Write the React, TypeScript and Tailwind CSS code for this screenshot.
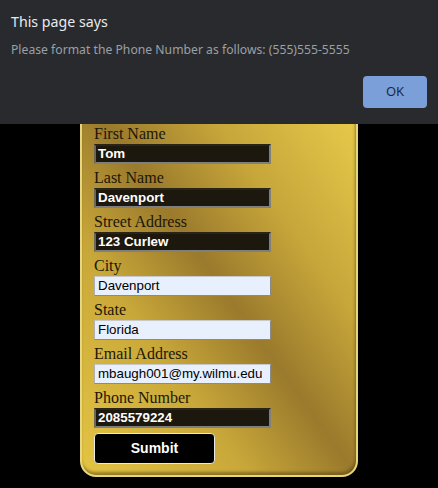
export default function App() {
  const fields = [
    { label: 'First Name', value: 'Tom', dark: true },
    { label: 'Last Name', value: 'Davenport', dark: true },
    { label: 'Street Address', value: '123 Curlew', dark: true },
    { label: 'City', value: 'Davenport', dark: false },
    { label: 'State', value: 'Florida', dark: false },
    { label: 'Email Address', value: 'mbaugh001@my.wilmu.edu', dark: false },
    { label: 'Phone Number', value: '2085579224', dark: true },
  ];

  return (
    <div className="relative min-h-[488px] w-full overflow-hidden bg-black">
      {/* Form card, top part sits under the alert */}
      <div className="pl-[80px] pt-[90px]">
        <div className="w-[278px] rounded-b-[16px] rounded-t-[8px] border-2 border-[#e6d77c] bg-[linear-gradient(to_top_right,#e4c443_0%,#c9a83a_30%,#9a7a2c_50%,#c6a53a_70%,#ebcf4c_100%)] px-[12px] pb-[11px] pt-[33px] shadow-[inset_-1px_-3px_3px_rgba(90,65,15,0.55)]">
          {fields.map((f) => (
            <div key={f.label} className="mb-[5px] flex flex-col">
              <label className="font-['Liberation_Serif',serif] text-[16px] leading-[18px] text-[#1c1608]">
                {f.label}
              </label>
              {f.dark ? (
                <div className="mt-px flex h-[20px] w-[177px] items-center border-2 border-t-[#2a2416] border-l-[#6d675a] border-b-[#7f7f7f] border-r-[#7f7f7f] bg-[#1d180e] px-[2px] font-['Liberation_Sans',sans-serif] text-[13.33px] font-bold text-white">
                  {f.value}
                </div>
              ) : (
                <div className="mt-px flex h-[20px] w-[177px] items-center border border-t-[#c8c8c8] border-l-[#b0b0b0] border-b-[#8a8a8a] border-r-[#8a8a8a] bg-[#e8f0fe] px-[3px] font-['Liberation_Sans',sans-serif] text-[13.33px] text-black">
                  {f.value}
                </div>
              )}
            </div>
          ))}
          <button className="flex h-[31px] w-[121px] items-center justify-center rounded-[4px] border border-[#e9e9e9] bg-black font-['Liberation_Sans',sans-serif] text-[14px] font-bold text-white">
            Sumbit
          </button>
        </div>
      </div>

      {/* Browser alert */}
      <div className="absolute left-0 top-0 h-[124px] w-full bg-[#292a2d] px-[11px] pt-[11px] font-['Noto_Sans',sans-serif]">
        <div className="text-[14.2px] leading-[21px] text-[#e8eaed]">This page says</div>
        <div className="mt-[9px] text-[12.2px] leading-[18px] text-[#9aa0a6]">
          Please format the Phone Number as follows: (555)555-5555
        </div>
        <div className="mt-[17px] flex justify-end">
          <button className="flex h-[32px] w-[64px] items-center justify-center rounded-[4px] bg-[#7b9fd8] text-[13px] text-[#1f2a3c]">
            OK
          </button>
        </div>
      </div>
    </div>
  );
}
